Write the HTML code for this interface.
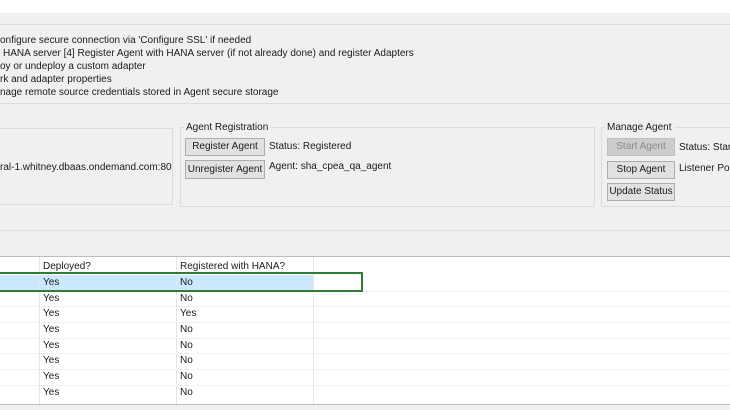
<!DOCTYPE html>
<html><head><style>
*{margin:0;padding:0;box-sizing:border-box}
body{width:730px;height:410px;overflow:hidden;background:#f0f0f0;font-family:"Liberation Sans",sans-serif;font-size:10px;color:#1a1a1a;position:relative}
.a{position:absolute;white-space:nowrap}
.btn{position:absolute;background:#e1e1e1;border:1px solid #adadad;text-align:center;line-height:16px;white-space:nowrap;font-size:10px}
.hl{position:absolute;height:1px;background:#d8d8d8}
.vl{position:absolute;width:1px;background:#e6e6e6}
.box{position:absolute;border:1px solid #dcdcdc}
</style></head><body>
<div class="a" style="left:0;top:0;width:730px;height:13px;background:#fff"></div>
<div class="box" style="left:-2px;top:24px;width:740px;height:80px"></div>
<div class="a" style="left:0;top:35px">onfigure secure connection via 'Configure SSL' if needed</div>
<div class="a" style="left:3px;top:48px">HANA server [4] Register Agent with HANA server (if not already done) and register Adapters</div>
<div class="a" style="left:0;top:61px">oy or undeploy a custom adapter</div>
<div class="a" style="left:0;top:74px">rk and adapter properties</div>
<div class="a" style="left:0;top:87px">nage remote source credentials stored in Agent secure storage</div>

<div class="box" style="left:-2px;top:128px;width:175px;height:77px"></div>
<div class="a" style="left:0;top:162px">ral-1.whitney.dbaas.ondemand.com:80</div>

<div class="box" style="left:180px;top:127px;width:415px;height:80px"></div>
<div class="a" style="left:184px;top:122px;background:#f0f0f0;padding:0 2px">Agent Registration</div>
<div class="btn" style="left:185px;top:138px;width:80px;height:18px">Register Agent</div>
<div class="btn" style="left:185px;top:160px;width:80px;height:19px;line-height:18px">Unregister Agent</div>
<div class="a" style="left:269px;top:141px">Status: Registered</div>
<div class="a" style="left:269px;top:161px">Agent: sha_cpea_qa_agent</div>

<div class="box" style="left:601px;top:127px;width:140px;height:80px"></div>
<div class="a" style="left:605px;top:122px;background:#f0f0f0;padding:0 2px">Manage Agent</div>
<div class="btn" style="left:607px;top:138px;width:68px;height:18px;background:#cccccc;border-color:#bfbfbf;color:#8a8a8a">Start Agent</div>
<div class="btn" style="left:607px;top:161px;width:68px;height:18px">Stop Agent</div>
<div class="btn" style="left:607px;top:183px;width:68px;height:18px">Update Status</div>
<div class="a" style="left:679px;top:142px">Status: Start</div>
<div class="a" style="left:679px;top:163px">Listener Port</div>

<div class="hl" style="left:0;top:230px;width:730px;background:#dedede"></div>
<div class="a" style="left:0;top:256px;width:730px;height:148px;background:#fff;border-top:1px solid #bdbdbd"></div>
<div class="a" style="left:0;top:275px;width:314px;height:16px;background:#cce8ff"></div>
<div class="vl" style="left:39px;top:257px;height:147px"></div>
<div class="vl" style="left:176px;top:257px;height:147px"></div>
<div class="vl" style="left:313px;top:257px;height:147px"></div>
<div class="hl" style="left:0;top:291px;width:730px;background:#f0f0f0"></div>
<div class="hl" style="left:0;top:306px;width:730px;background:#f0f0f0"></div>
<div class="hl" style="left:0;top:322px;width:730px;background:#f0f0f0"></div>
<div class="hl" style="left:0;top:338px;width:730px;background:#f0f0f0"></div>
<div class="hl" style="left:0;top:353px;width:730px;background:#f0f0f0"></div>
<div class="hl" style="left:0;top:369px;width:730px;background:#f0f0f0"></div>
<div class="hl" style="left:0;top:385px;width:730px;background:#f0f0f0"></div>
<div class="a" style="left:43px;top:261px">Deployed?</div>
<div class="a" style="left:180px;top:261px">Registered with HANA?</div>
<div class="a" style="left:43px;top:277px">Yes</div><div class="a" style="left:180px;top:277px">No</div>
<div class="a" style="left:43px;top:293px">Yes</div><div class="a" style="left:180px;top:293px">No</div>
<div class="a" style="left:43px;top:308px">Yes</div><div class="a" style="left:180px;top:308px">Yes</div>
<div class="a" style="left:43px;top:324px">Yes</div><div class="a" style="left:180px;top:324px">No</div>
<div class="a" style="left:43px;top:340px">Yes</div><div class="a" style="left:180px;top:340px">No</div>
<div class="a" style="left:43px;top:355px">Yes</div><div class="a" style="left:180px;top:355px">No</div>
<div class="a" style="left:43px;top:371px">Yes</div><div class="a" style="left:180px;top:371px">No</div>
<div class="a" style="left:43px;top:387px">Yes</div><div class="a" style="left:180px;top:387px">No</div>
<div class="a" style="left:-3px;top:272px;width:366px;height:20px;border:2px solid #2e7d32"></div>
<div class="hl" style="left:0;top:404px;width:730px;background:#bdbdbd"></div>
</body></html>
